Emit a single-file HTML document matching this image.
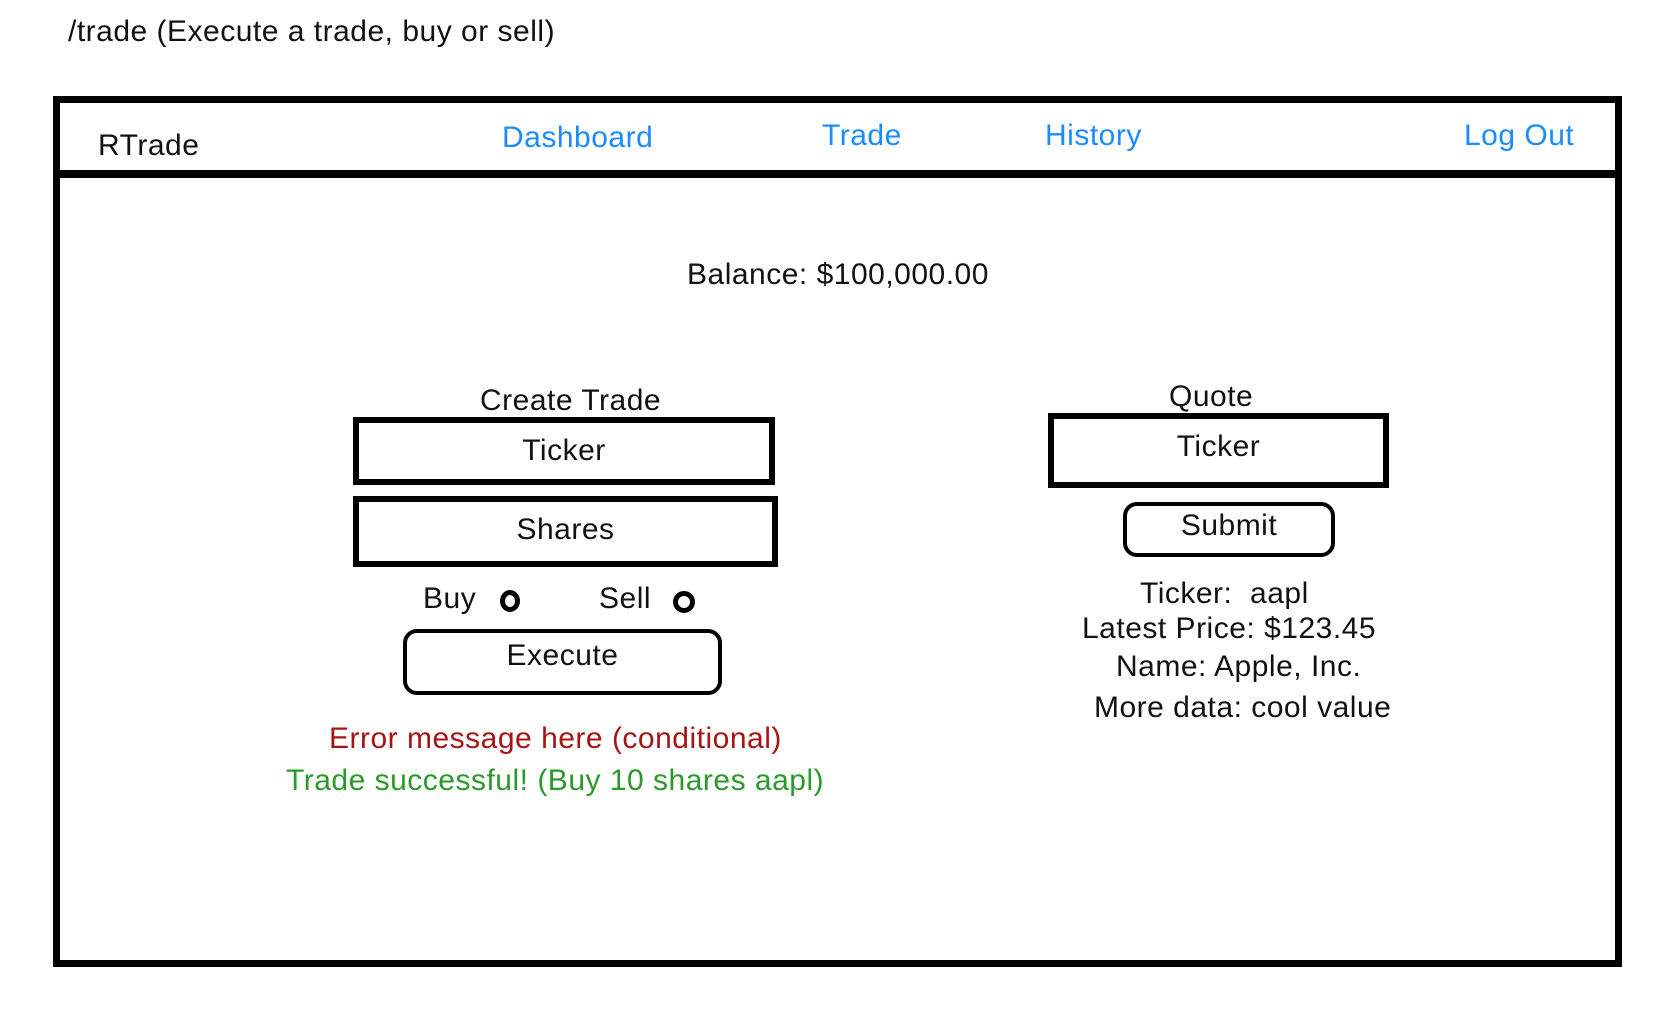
<!DOCTYPE html>
<html><head><meta charset="utf-8"><style>
body{margin:0;width:1672px;height:1030px;background:#fff;position:relative;overflow:hidden;font-family:"Liberation Sans",Arial,sans-serif;font-size:30px;letter-spacing:0.5px;color:#111}
.t{position:absolute;line-height:34px;white-space:nowrap}
.b{position:absolute;box-sizing:border-box;border:6px solid #000}
.blue{color:#1a8cff}
</style></head><body>
<div class="t" style="left:68px;top:15px">/trade (Execute a trade, buy or sell)</div>
<div class="b" style="left:53px;top:96px;width:1569px;height:871px;border-width:7px"></div>
<div style="position:absolute;left:53px;top:170px;width:1569px;height:8px;background:#000"></div>
<div class="t" style="left:98px;top:129px">RTrade</div>
<div class="t blue" style="left:502px;top:121px">Dashboard</div>
<div class="t blue" style="left:822px;top:119px">Trade</div>
<div class="t blue" style="left:1045px;top:119px">History</div>
<div class="t blue" style="left:1464px;top:119px">Log Out</div>
<div class="t" style="left:687px;top:258px">Balance: $100,000.00</div>
<div class="t" style="left:480px;top:384px">Create Trade</div>
<div class="b" style="left:353px;top:417px;width:422px;height:68px"></div>
<div class="t" style="left:353px;top:434px;width:422px;text-align:center">Ticker</div>
<div class="b" style="left:353px;top:496px;width:425px;height:71px"></div>
<div class="t" style="left:353px;top:513px;width:425px;text-align:center">Shares</div>
<div class="t" style="left:423px;top:582px">Buy</div>
<div style="position:absolute;left:500px;top:590px;width:20px;height:22px;box-sizing:border-box;border:5px solid #000;border-radius:50%"></div>
<div class="t" style="left:599px;top:582px">Sell</div>
<div style="position:absolute;left:673px;top:591px;width:22px;height:22px;box-sizing:border-box;border:5px solid #000;border-radius:50%"></div>
<div class="b" style="left:403px;top:629px;width:319px;height:66px;border-width:4px;border-radius:14px"></div>
<div class="t" style="left:403px;top:639px;width:319px;text-align:center">Execute</div>
<div class="t" style="left:329px;top:722px;color:#a51515">Error message here (conditional)</div>
<div class="t" style="left:286px;top:764px;color:#2a9a2a">Trade successful! (Buy 10 shares aapl)</div>
<div class="t" style="left:1169px;top:380px">Quote</div>
<div class="b" style="left:1048px;top:413px;width:341px;height:75px"></div>
<div class="t" style="left:1048px;top:430px;width:341px;text-align:center">Ticker</div>
<div class="b" style="left:1123px;top:502px;width:212px;height:55px;border-width:4px;border-radius:14px"></div>
<div class="t" style="left:1123px;top:509px;width:212px;text-align:center">Submit</div>
<div class="t" style="left:1140px;top:577px">Ticker:&nbsp; aapl</div>
<div class="t" style="left:1082px;top:612px">Latest Price: $123.45</div>
<div class="t" style="left:1116px;top:650px">Name: Apple, Inc.</div>
<div class="t" style="left:1094px;top:691px">More data: cool value</div>
</body></html>
